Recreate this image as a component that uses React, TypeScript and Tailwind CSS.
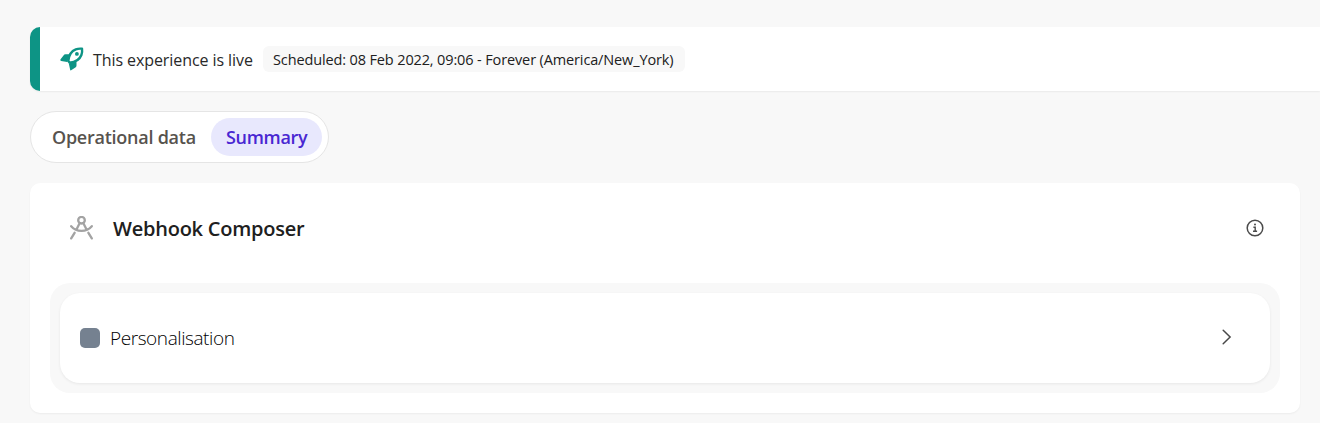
import React from "react";

function RocketIcon() {
  return (
    <svg viewBox="0 0 24 24" className="size-6 shrink-0 text-[#0d9485]" fill="none">
      <path
        d="M8.3 14C8.8 8.5 11.5 4 15.8 2.4Q18.6 1.3 22 1.7Q22.5 5.2 21.4 8C19.7 12.3 15.3 15.2 9.7 15.6Z"
        stroke="currentColor"
        strokeWidth="2.4"
        strokeLinejoin="round"
      />
      <path d="M10 7.2H5.6Q4.2 7.2 3.5 8.4L.4 12.6Q0 14 1.2 14L7.2 15ZM8.8 16.4 10.1 22.6Q10.3 24 11.5 23.1L15.4 20.6Q16.5 19.9 16.5 18.4V14Z" fill="currentColor" />
      <circle cx="16.9" cy="6.9" r="1.9" fill="currentColor" />
    </svg>
  );
}

function CompassIcon() {
  return (
    <svg
      viewBox="0 0 24 24"
      className="size-6 shrink-0 text-[#a3a3a3]"
      fill="none"
      stroke="currentColor"
      strokeWidth="2.3"
      strokeLinecap="round"
      strokeLinejoin="round"
    >
      <circle cx="12.5" cy="4.2" r="3.3" />
      <path d="M10.6 7.2 7.6 13.2M5.6 16.8 2.2 22.4M14.4 7.2 17.4 13.2M19.4 16.8 22.8 22.4M2.2 10.2Q6.2 14.9 12.5 14.9Q18.8 14.9 22.8 10.2" />
    </svg>
  );
}

function InfoIcon() {
  return (
    <svg viewBox="0 0 18 18" className="size-[18px] text-[#4b4b4b]" fill="none" stroke="currentColor">
      <circle cx="9" cy="9" r="7.8" strokeWidth="1.5" />
      <circle cx="9" cy="5.5" r="1" fill="currentColor" stroke="none" />
      <path d="M7.4 8.2H9.2V12.2M7 12.3H11.1" strokeWidth="1.4" />
    </svg>
  );
}

function StatusBanner() {
  return (
    <div className="flex h-16 items-center rounded-l-[10px] border-l-[10px] border-[#0d9485] bg-white pl-5 shadow-[0_1px_2px_rgba(0,0,0,0.06)]">
      <RocketIcon />
      <span className="ml-[9px] w-[160px] pt-[2px] text-[16px] font-normal tracking-[-0.08px] text-[#292929]">
        This experience is live
      </span>
      <span className="ml-[10px] flex h-[26px] w-[422px] items-center rounded-md bg-[#f8f8f8] pt-[2px] pl-[10px] text-[14.5px] tracking-[-0.13px] text-[#202020]">
        Scheduled: 08 Feb 2022, 09:06 - Forever (America/New_York)
      </span>
    </div>
  );
}

function ViewTabs() {
  return (
    <div className="mt-5 flex h-[52px] w-[299px] items-center rounded-full border border-[#e5e5e5] bg-white pl-[21px] text-[18px] font-semibold">
      <button className="w-[159px] text-left tracking-[-0.25px] text-[#57534e]">Operational data</button>
      <button className="h-[38px] w-[111px] rounded-full bg-[#e8e8fd] pl-[15px] text-left tracking-[-0.3px] text-[#4927d2]">
        Summary
      </button>
    </div>
  );
}

export default function App() {
  return (
    <main className="h-[423px] overflow-hidden bg-[#f8f8f8] pt-[27px] pl-[30px] font-['Open_Sans','Noto_Sans',sans-serif] whitespace-nowrap">
      <StatusBanner />
      <ViewTabs />
      <section className="mt-5 mr-5 h-[230px] rounded-[10px] bg-white px-5 shadow-[0_1px_2px_rgba(0,0,0,0.05)]">
        <header className="flex h-[100px] items-center pr-4 pb-[10px] pl-[19px]">
          <CompassIcon />
          <h1 className="ml-5 flex-1 pt-[2px] text-[20px] font-semibold tracking-[-0.23px] text-[#202020]">Webhook Composer</h1>
          <InfoIcon />
        </header>
        <div className="rounded-[20px] bg-[#f8f8f8] p-[10px]">
          <div className="flex h-[90px] items-center rounded-[20px] bg-white px-5 shadow-[0_1px_3px_rgba(0,0,0,0.07)]">
            <span className="size-5 rounded-[5px] bg-[#758190]" />
            <span className="ml-[10px] flex-1 text-[19px] font-light tracking-[-0.42px] text-black">Personalisation</span>
            <svg viewBox="0 0 10 16" className="mr-[18px] mb-[2px] h-4 w-[10px]" fill="none" stroke="#484848" strokeWidth="1.5" strokeLinecap="round">
              <path d="m1.2 1.3 6.9 6.7-6.9 6.7" />
            </svg>
          </div>
        </div>
      </section>
    </main>
  );
}
